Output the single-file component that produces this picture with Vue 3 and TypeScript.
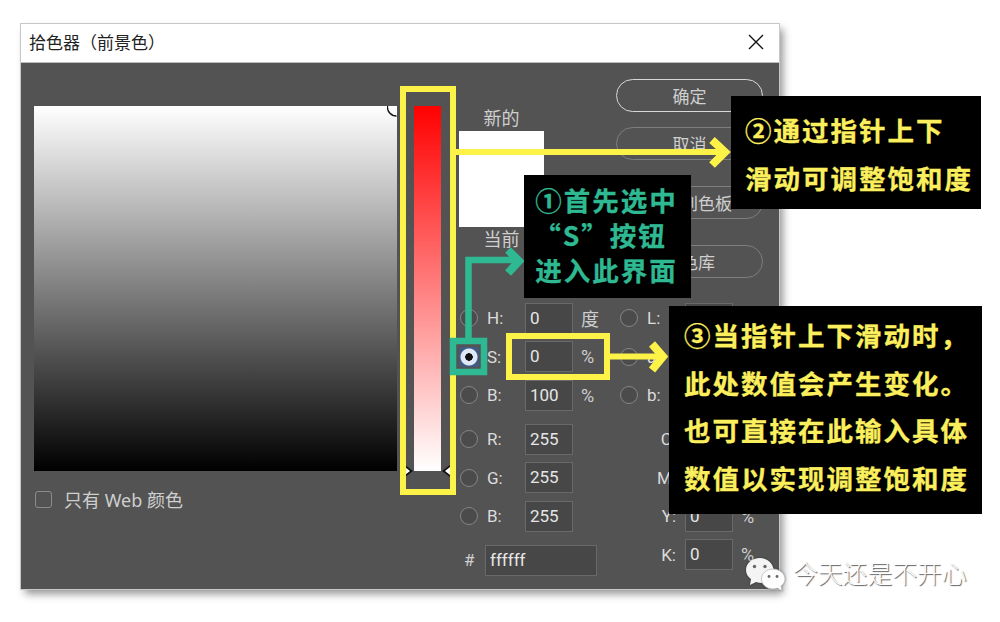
<script setup lang="ts">
interface Row { label: string; value?: string; unit?: string; radio?: boolean; on?: boolean }
const leftGroups: Row[][] = [
  [
    { label: 'H:', value: '0', unit: '度', radio: true },
    { label: 'S:', value: '0', unit: '%', radio: true, on: true },
    { label: 'B:', value: '100', unit: '%', radio: true },
  ],
  [
    { label: 'R:', value: '255', radio: true },
    { label: 'G:', value: '255', radio: true },
    { label: 'B:', value: '255', radio: true },
  ],
]
const rightGroups: Row[][] = [
  [
    { label: 'L:', value: '100', radio: true },
    { label: 'a:', value: '0', radio: true },
    { label: 'b:', value: '0', radio: true },
  ],
  [
    { label: 'C:', value: '0', unit: '%' },
    { label: 'M:', value: '0', unit: '%' },
    { label: 'Y:', value: '0', unit: '%' },
    { label: 'K:', value: '0', unit: '%' },
  ],
]
const buttons = ['确定', '取消', '添加到色板', '颜色库']
</script>

<template>
  <div class="page">
    <section class="dialog">
      <header class="titlebar">
        <span>拾色器（前景色）</span>
        <svg class="close" width="16" height="16" viewBox="0 0 16 16">
          <path d="M1 1 L15 15 M15 1 L1 15" stroke="#111" stroke-width="1.4" fill="none" />
        </svg>
      </header>
      <div class="body">
        <div class="picker">
          <div class="field">
            <svg class="marker" width="10" height="11" viewBox="0 0 10 11">
              <path d="M0.5 0 A9 9 0 0 0 9.5 10" stroke="#111" stroke-width="1.3" fill="none" />
            </svg>
          </div>
          <label class="webonly"><i class="check"></i><span>只有 Web 颜色</span></label>
        </div>
        <div class="slider">
          <svg class="tri tri-l" width="8" height="12" viewBox="0 0 8 12">
            <path d="M0 0 L8 6 L0 12Z" fill="#111" />
            <path d="M0 2 L5 6 L0 10Z" fill="#fff" />
          </svg>
          <svg class="tri tri-r" width="8" height="12" viewBox="0 0 8 12">
            <path d="M8 0 L0 6 L8 12Z" fill="#111" />
            <path d="M8 2 L3 6 L8 10Z" fill="#fff" />
          </svg>
        </div>
        <div class="side">
          <div class="top">
            <div class="swatches">
              <div class="cap">新的</div>
              <div class="swatch"></div>
              <div class="cap">当前</div>
            </div>
            <div class="buttons">
              <button v-for="(b, i) in buttons" :key="b" class="btn" :class="{ primary: i === 0 }">{{ b }}</button>
            </div>
          </div>
          <div class="form">
            <div class="col col-left">
              <div v-for="(g, gi) in leftGroups" :key="gi" class="group">
                <div v-for="r in g" :key="r.label + gi" class="row">
                  <i class="radio" :class="{ on: r.on }"></i>
                  <span class="lab">{{ r.label }}</span>
                  <span class="inp">{{ r.value }}</span>
                  <span class="unit">{{ r.unit }}</span>
                </div>
              </div>
              <div class="group">
                <div class="row hex">
                  <span class="hash">#</span>
                  <span class="inp wide">ffffff</span>
                </div>
              </div>
            </div>
            <div class="col col-right">
              <div v-for="(g, gi) in rightGroups" :key="gi" class="group">
                <div v-for="r in g" :key="r.label" class="row">
                  <i v-if="r.radio" class="radio"></i>
                  <span v-else class="radio-gap"></span>
                  <span class="lab" :class="{ end: !r.radio }">{{ r.label }}</span>
                  <span class="inp">{{ r.value }}</span>
                  <span class="unit">{{ r.unit }}</span>
                </div>
              </div>
            </div>
          </div>
        </div>
      </div>
    </section>

    <svg class="annot" width="1000" height="622" viewBox="0 0 1000 622">
      <g fill="none" stroke="#fdf348">
        <rect x="403" y="89" width="50" height="403" stroke-width="6" />
        <rect x="509" y="336" width="98" height="41" stroke-width="6" />
        <path d="M456 152 H726" stroke-width="6" />
        <path d="M712 140 L725 152 L712 165" stroke-width="8" />
        <path d="M610 356.5 H664" stroke-width="6" />
        <path d="M652 344 L663 356.5 L652 370" stroke-width="8" />
      </g>
      <g fill="none" stroke="#2fb992">
        <path d="M468.5 340 V260 H520" stroke-width="6.5" />
        <path d="M508 250 L519 261 L508 273" stroke-width="8" />
        <rect x="453" y="341" width="31" height="31" stroke-width="6.5" />
      </g>
    </svg>

    <div class="note note-y n2">
      <p>②通过指针上下</p>
      <p>滑动可调整饱和度</p>
    </div>
    <div class="note note-g n1">
      <p>①首先选中</p>
      <p class="quoted">“S”按钮</p>
      <p>进入此界面</p>
    </div>
    <div class="note note-y n3">
      <p>③当指针上下滑动时，</p>
      <p>此处数值会产生变化。</p>
      <p>也可直接在此输入具体</p>
      <p>数值以实现调整饱和度</p>
    </div>

    <div class="mark">
      <svg width="42" height="36" viewBox="0 0 42 36">
        <path d="M15 1 C7 1 1 6 1 13 C1 17 3 20 6 22 L5 28 L11 25 C13 25.600 15 26 17 26 L29 14 C28 6 22 1 15 1Z" fill="#f4f4f4" />
        <circle cx="9.500" cy="9.500" r="1.700" fill="#666" />
        <circle cx="20" cy="9.500" r="1.700" fill="#666" />
        <path d="M28 12 C21.500 12 16.500 16.500 16.500 22 C16.500 27.500 21.500 32 28 32 C29.500 32 31 31.700 32.500 31.200 L37 34 L36 29 C38.500 27.200 40 24.800 40 22 C40 16.500 34.500 12 28 12Z" fill="#fdfdfd" stroke="#bbb" stroke-width="0.800" />
        <circle cx="24" cy="19.500" r="1.400" fill="#666" />
        <circle cx="32" cy="19.500" r="1.400" fill="#666" />
      </svg>
      <span>今天还是不开心</span>
    </div>
  </div>
</template>

<style>
html, body { margin: 0; background: #fff; }
</style>

<style scoped>
.page {
  position: relative;
  width: 1000px;
  height: 622px;
  overflow: hidden;
  background: #fff;
  padding: 24px 0 0 21px;
  box-sizing: border-box;
  font-family: Roboto, "Noto Sans CJK SC", sans-serif;
}
.dialog {
  width: 758px;
  height: 565px;
  display: flex;
  flex-direction: column;
  box-shadow: 4px 5px 8px rgba(0, 0, 0, 0.42);
  outline: 1px solid #c8c8c8;
}
.titlebar {
  background: #fff;
  border-bottom: 1px solid #bdbdbd;
  display: flex;
  align-items: center;
  justify-content: space-between;
  padding: 0 15px 4px 8px;
  box-sizing: content-box;
  height: 34px;
  font-size: 17px;
  color: #222;
  font-family: "Noto Sans CJK SC", sans-serif;
}
.close { display: block; margin-top: 1px; }
.body {
  flex: 1;
  background: #535353;
  display: flex;
  padding-left: 13px;
  color: #d9d9d9;
}
.picker { width: 363px; padding-top: 43px; }
.field {
  position: relative;
  height: 365px;
  background: linear-gradient(#ffffff, #000000);
}
.marker { position: absolute; right: 0; top: 0; }
.webonly {
  display: flex;
  align-items: center;
  gap: 12px;
  margin: 15px 0 0 1px;
  font-size: 18px;
  color: #cfcfcf;
  font-family: "Noto Sans", "Noto Sans CJK SC", sans-serif;
}
.check {
  width: 15px;
  height: 15px;
  border: 1.5px solid #8c8c8c;
  border-radius: 3px;
}
.slider {
  position: relative;
  width: 27px;
  height: 365px;
  margin: 43px 0 0 17px;
  background: linear-gradient(#ff0000, #ffffff);
}
.tri { position: absolute; bottom: -6px; display: block; }
.tri-l { left: -9px; }
.tri-r { right: -9px; }
.side { width: 304px; margin-left: 18px; }
.top { height: 236px; display: flex; }
.swatches { width: 85px; margin-right: 72px; padding-top: 43px; }
.cap {
  height: 23px;
  line-height: 23px;
  text-align: center;
  font-size: 18px;
  color: #cfcfcf;
  font-family: "Noto Sans CJK SC", sans-serif;
}
.swatch { height: 96px; background: #fff; margin: 2px 0 0; }
.buttons { width: 147px; padding-top: 16px; display: flex; flex-direction: column; }
.btn {
  flex: none;
  height: 33px;
  padding: 0;
  box-sizing: border-box;
  border: 1.5px solid #7e7e7e;
  border-radius: 17px;
  background: transparent;
  color: #cfcfcf;
  font-size: 17px;
  font-family: "Noto Sans CJK SC", sans-serif;
  margin-bottom: 26px;
}
.btn.primary { border-color: #d8d8d8; margin-bottom: 15px; }
.form { display: flex; }
.col { display: flex; flex-direction: column; gap: 5.5px; }
.col-left { width: 161px; }
.row {
  height: 38.5px;
  display: flex;
  align-items: center;
  font-size: 17px;
  color: #dcdcdc;
}
.radio {
  flex: none;
  width: 18px;
  height: 18px;
  box-sizing: border-box;
  margin-left: 1px;
  border: 1.5px solid #858585;
  border-radius: 50%;
  background: #4b4b4b;
}
.col-right .radio { margin-left: 0; }
.radio-gap { flex: none; width: 18px; }
.radio.on {
  border: none;
  background: radial-gradient(circle, #111 0 3.5px, #dfe8f5 4px 8px, #3f5a85 9px);
  border-radius: 2px;
  box-shadow: 0 0 0 1px #3f5a85;
}
.lab { flex: none; width: 47px; padding-left: 9px; box-sizing: border-box; }
.lab.end { text-align: right; padding: 0 9px 0 0; }
.inp {
  flex: none;
  width: 48px;
  height: 31px;
  line-height: 29px;
  box-sizing: border-box;
  border: 1px solid #696969;
  background: #474747;
  padding-left: 4px;
  color: #e6e6e6;
}
.unit { margin-left: 8px; font-size: 18px; color: #cfcfcf; font-family: Roboto, "Noto Sans CJK SC", sans-serif; }
.hex .hash { width: 26px; padding-left: 5px; box-sizing: border-box; color: #cfcfcf; }
.inp.wide { width: 112px; }
.annot { position: absolute; left: 0; top: 0; }
.note {
  position: absolute;
  box-sizing: border-box;
  background: #000;
  font-family: "Noto Sans CJK SC", sans-serif;
  font-weight: 700;
  font-size: 26.5px;
  letter-spacing: 2px;
  white-space: nowrap;
  -webkit-text-stroke: 0.3px currentColor;
}
.note p { margin: 0; }
.note-y { color: #fbef5e; }
.note-g { color: #2fb992; }
.n2 { left: 731px; top: 96px; width: 250px; height: 113px; padding: 10px 0 0 14px; line-height: 48px; }
.n1 { left: 524px; top: 175px; width: 167px; height: 123px; padding: 7px 2px 0 0; line-height: 35px; text-align: center; }
.n1 .quoted { padding-right: 12px; }
.n3 { left: 669px; top: 306px; width: 313px; height: 208px; padding: 5px 0 0 15px; line-height: 47.7px; }
.mark {
  position: absolute;
  left: 745px;
  top: 557px;
  display: flex;
  align-items: center;
  gap: 6px;
}
.mark svg { display: block; filter: drop-shadow(0 0 1px rgba(0,0,0,.4)); }
.mark span {
  font-size: 24.800px;
  font-weight: 300;
  color: #fff;
  font-family: "Noto Sans CJK SC", sans-serif;
  text-shadow: 1px 1px 1px rgba(0, 0, 0, 0.65);
  margin-top: -6px;
  white-space: nowrap;
}
</style>
